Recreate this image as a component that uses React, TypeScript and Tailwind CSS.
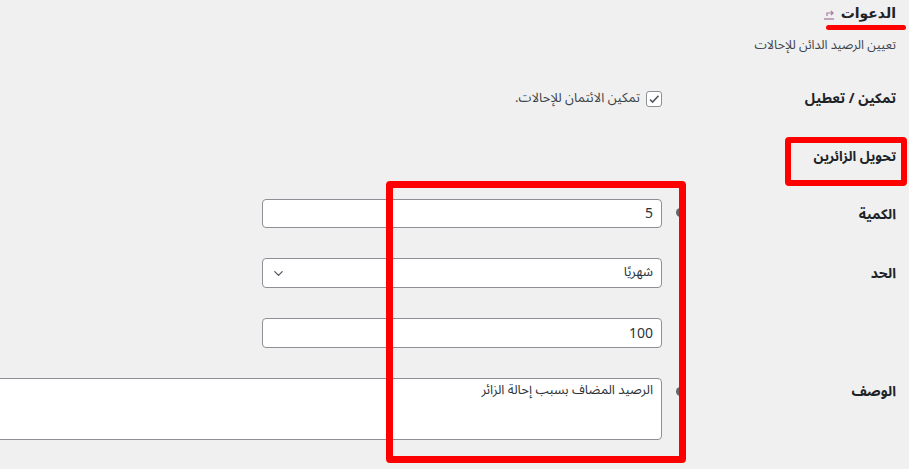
import { ChevronDown } from 'lucide-react';

const font = { fontFamily: '"Noto Sans Arabic", "DejaVu Sans", "Noto Sans", sans-serif' };
const titleFont = { fontFamily: '"DejaVu Sans", sans-serif' };

function Row({ label, tip, children, labelTop = 'pt-[5px]' }: { label?: string; tip?: boolean; children: React.ReactNode; labelTop?: string }) {
  return (
    <div className="flex items-start py-[15px]">
      <div className={`relative w-[210px] shrink-0 ${labelTop}`}>
        <span className="text-[14px] font-bold text-[#1d2327]">{label}</span>
        {tip && <span className="absolute left-[-10px] top-[9px] w-[9px] h-[9px] rounded-full bg-[#666]" />}
      </div>
      <div className="mr-[24px] flex-1">{children}</div>
    </div>
  );
}

export default function App() {
  return (
    <div dir="rtl" style={font} className="relative w-[909px] h-[469px] overflow-hidden bg-[#f0f0f1] text-[#3c434a] text-[13px]">
      <div className="pr-[13px]">
        <h2 style={titleFont} className="relative z-10 pt-[3px] flex items-center gap-[6px] text-[14px] font-bold text-[#1d2327] leading-[20px]">
          <span>الدعوات</span>
          <svg width="12" height="10" viewBox="0 0 12 10" className="mt-[4px]">
            <path d="M1 9h10" stroke="#a77ba3" strokeWidth="1.3" />
            <path d="M4 6V3h6M8 1l2 2-2 2" stroke="#a77ba3" strokeWidth="1.2" fill="none" />
          </svg>
        </h2>
        <p className="mt-[12px] text-[12.5px] leading-[20px]">تعيين الرصيد الدائن للإحالات</p>

        <div className="mt-[33px] flex items-center">
          <div className="w-[210px] shrink-0 text-[14px] font-bold text-[#1d2327]">تمكين / تعطيل</div>
          <label className="mr-[24px] flex items-center gap-[6px]">
            <span className="w-[16px] h-[16px] border border-[#8c8f94] rounded-[3px] bg-white flex items-center justify-center">
              <svg width="12" height="12" viewBox="0 0 12 12">
                <path d="M2 6.5l2.6 2.6L10.5 2.8" stroke="#50575e" strokeWidth="1.6" fill="none" />
              </svg>
            </span>
            <span className="text-[13px]">تمكين الائتمان للإحالات.</span>
          </label>
        </div>

        <h3 className="mt-[38px] text-[13.5px] font-bold text-[#1d2327] leading-[20px]">تحويل الزائرين</h3>

        <div className="mt-[17px]">
          <Row label="الكمية" tip>
            <div className="w-[400px] h-[29px] bg-white border border-[#8c8f94] rounded-[4px] px-[8px] flex items-center text-[14px] text-[#2c3338]">5</div>
          </Row>
          <Row label="الحد">
            <div className="w-[400px] h-[30px] bg-white border border-[#8c8f94] rounded-[4px] pr-[8px] pl-[8px] flex items-center justify-between text-[13px] text-[#2c3338]">
              <span>شهريًا</span>
              <ChevronDown className="w-[15px] h-[15px] text-[#50575e]" strokeWidth={2} />
            </div>
          </Row>
          <Row>
            <div className="w-[400px] h-[30px] bg-white border border-[#8c8f94] rounded-[4px] px-[8px] flex items-center text-[14px] text-[#2c3338]">100</div>
          </Row>
          <Row label="الوصف" tip labelTop="pt-[3px]">
            <div className="w-[700px] h-[62px] bg-white border border-[#8c8f94] rounded-[4px] px-[8px] pt-[2px] text-[13px] text-[#2c3338]">
              الرصيد المضاف بسبب إحالة الزائر
            </div>
          </Row>
        </div>
      </div>

      {/* red annotations */}
      <div className="absolute left-[826px] top-[25px] w-[80px] h-[5px] rounded-full bg-[#ff0000]" />
      <div className="absolute left-[785px] top-[137px] w-[122px] h-[49px] border-[6px] border-[#ff0000] rounded-[4px]" />
      <div className="absolute left-[386px] top-[181px] w-[300px] h-[282px] border-[7px] border-[#ff0000] rounded-[4px]" />
    </div>
  );
}
